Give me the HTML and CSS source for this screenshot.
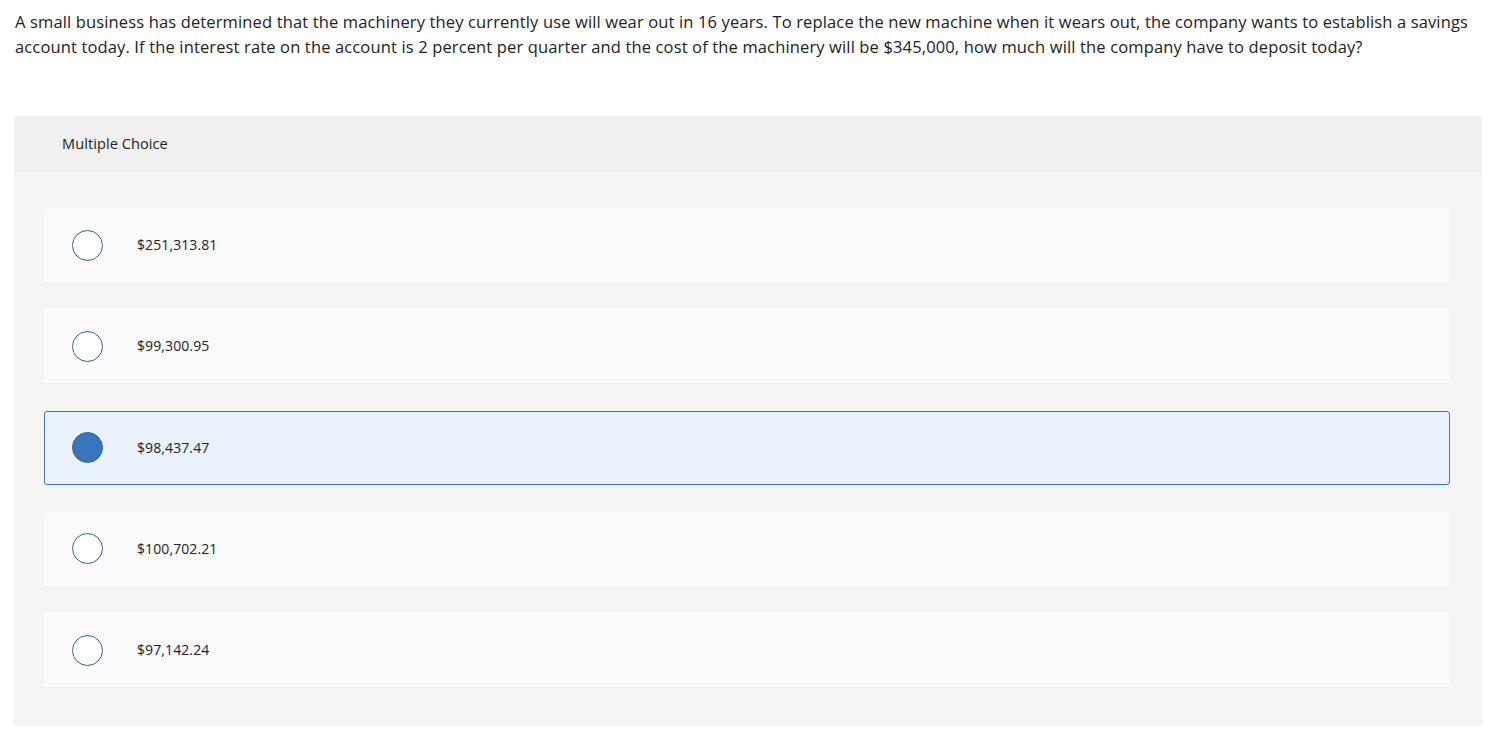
FILE: index.html
```html
<!DOCTYPE html>
<html>
<head>
<meta charset="utf-8">
<link rel="stylesheet" href="styles.css">
</head>
<body>
<div class="page">
  <p class="question">A small business has determined that the machinery they currently use will wear out in 16 years. To replace the new machine when it wears out, the company wants to establish a savings account today. If the interest rate on the account is 2 percent per quarter and the cost of the machinery will be $345,000, how much will the company have to deposit today?</p>
  <div class="panel">
    <div class="panel-head">Multiple Choice</div>
    <div class="panel-body">
      <div class="option"><span class="radio"></span><span class="label">$251,313.81</span></div>
      <div class="option"><span class="radio"></span><span class="label">$99,300.95</span></div>
      <div class="option selected"><span class="radio"></span><span class="label">$98,437.47</span></div>
      <div class="option"><span class="radio"></span><span class="label">$100,702.21</span></div>
      <div class="option"><span class="radio"></span><span class="label">$97,142.24</span></div>
    </div>
  </div>
</div>
</body>
</html>
```
FILE: styles.css
```css
html, body { margin: 0; padding: 0; background: #fff; }
body { font-family: "Open Sans", "Lato", sans-serif; color: #222; }
.page { padding: 9px 14px 0 14px; width: 1468px; }
.question { margin: 0 0 0 1px; font-size: 16.5px; line-height: 25px; letter-spacing: 0.14px; color: #222; }
.panel { margin-top: 57px; background: #f4f4f4; border-radius: 3px 3px 0 0; }
.panel-head { background: #f0f0f0; height: 56px; box-sizing: border-box; padding-bottom: 2px; display: flex; align-items: center; padding-left: 48px; font-size: 14.5px; letter-spacing: 0.1px; color: #222; border-radius: 3px 3px 0 0; }
.panel-body { padding: 36px 32px 39px 30px; display: flex; flex-direction: column; gap: 27.3px; }
.option { height: 74px; background: #fafafa; border-radius: 3px; display: flex; align-items: center; box-sizing: border-box; border: 1px solid transparent; }
.option.selected { background: #eaf2fb; border-color: #3b78c0; }
.radio { width: 29px; height: 29px; border: 1.5px solid #2f6599; border-radius: 50%; background: #fff; margin-left: 27px; flex: none; }
.selected .radio { background: #3875ba; border-color: #2f6599; }
.label { margin-left: 34px; font-size: 14px; letter-spacing: 0.1px; color: #222; padding-bottom: 1px; }
```
